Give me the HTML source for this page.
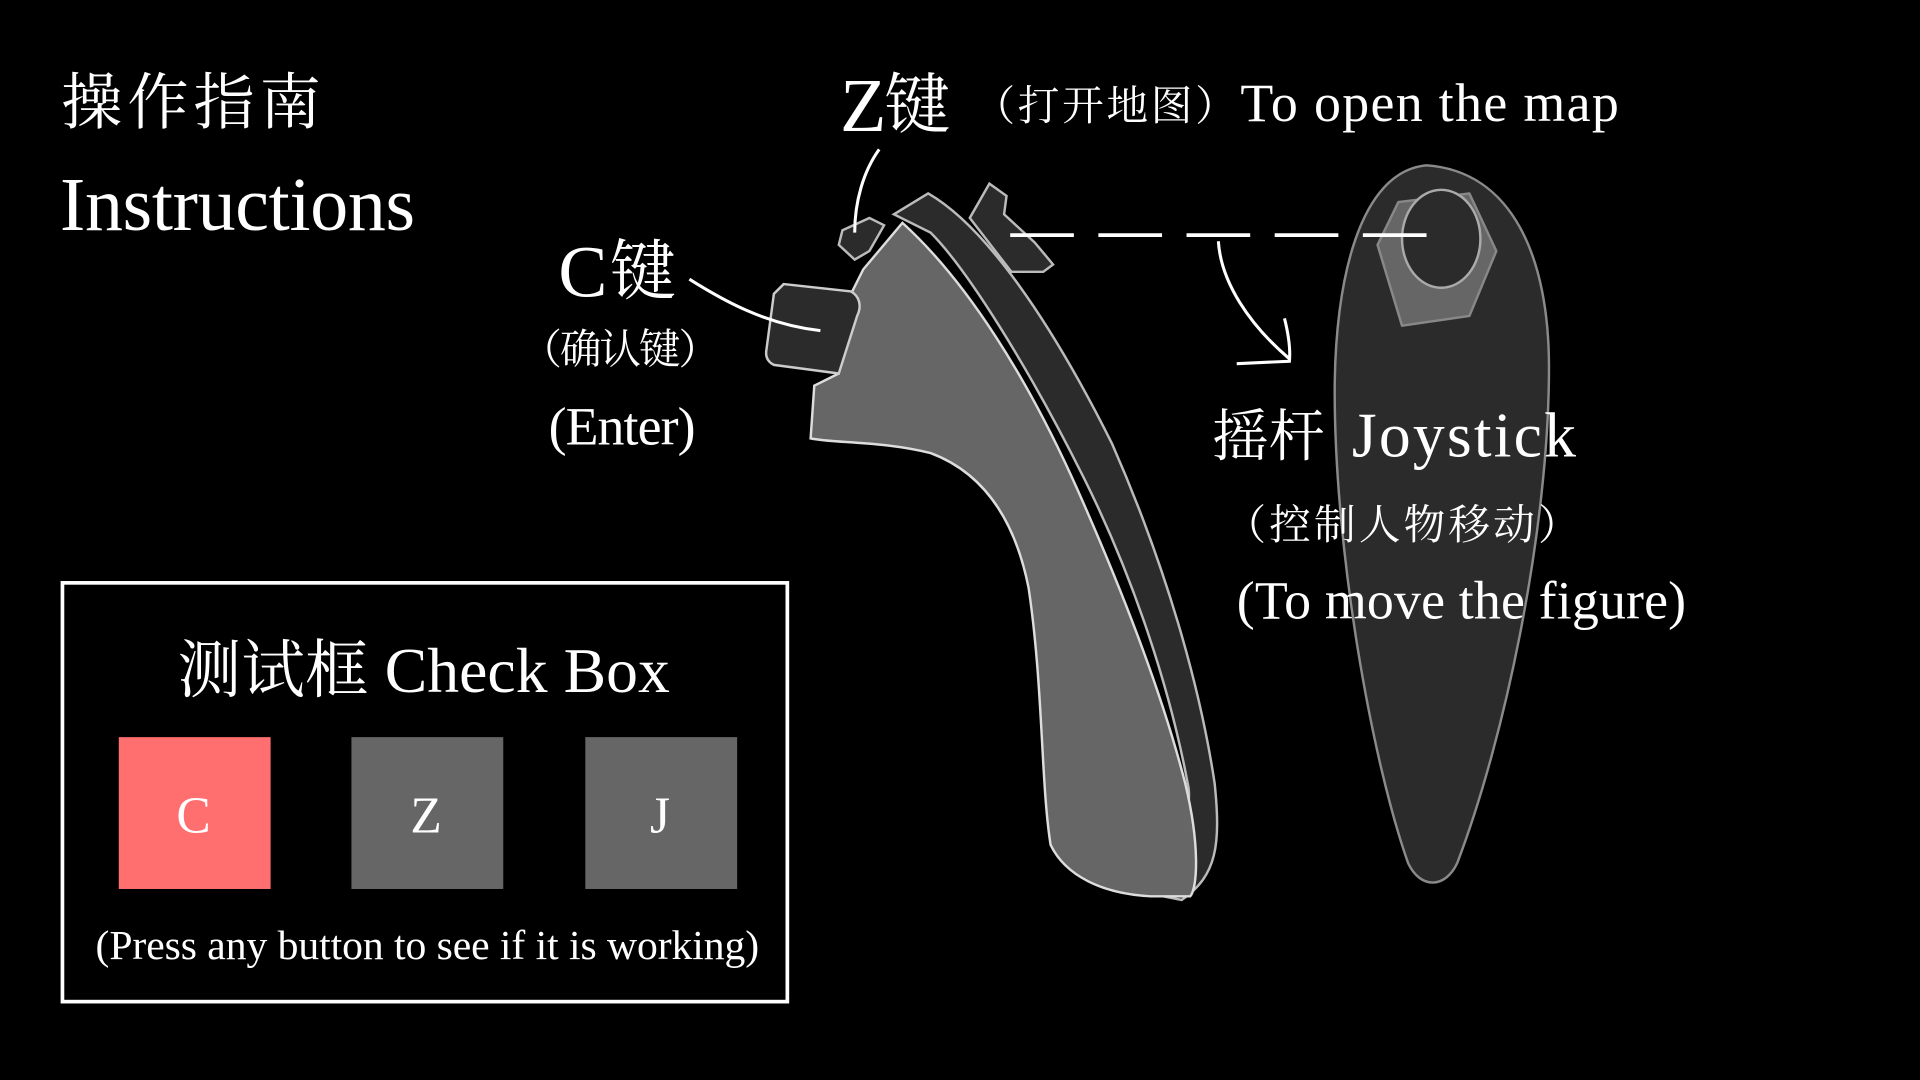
<!DOCTYPE html>
<html><head><meta charset="utf-8"><style>
html,body{margin:0;padding:0;background:#000;width:1920px;height:1080px;overflow:hidden}
svg{display:block}
text{fill:#fff;font-family:"Liberation Serif","Noto Serif CJK SC",serif}
.cj{font-family:"Noto Serif CJK SC","WenQuanYi Zen Hei",serif}
</style></head><body>
<svg width="1920" height="1080" viewBox="0 0 1568 882" preserveAspectRatio="none">
<rect width="1568" height="882" fill="#000"/>
<text class="cj" x="50" y="101" font-size="50" textLength="212">操作指南</text>
<text x="49" y="188" font-size="62" textLength="290">Instructions</text>
<rect x="51" y="476" width="592" height="342" fill="none" stroke="#fff" stroke-width="3"/>
<text x="346" y="565" font-size="52" text-anchor="middle" textLength="402">测试框 Check Box</text>
<rect x="97" y="602" width="124" height="124" fill="#ff6f6f"/>
<rect x="287" y="602" width="124" height="124" fill="#666"/>
<rect x="478" y="602" width="124" height="124" fill="#666"/>
<text x="158" y="680" font-size="42" text-anchor="middle">C</text>
<text x="348" y="680" font-size="42" text-anchor="middle">Z</text>
<text x="539" y="680" font-size="42" text-anchor="middle">J</text>
<text x="78" y="783" font-size="34" textLength="542">(Press any button to see if it is working)</text>
<text x="686" y="107" font-size="62">Z</text>
<text class="cj" x="722" y="104" font-size="54">键</text>
<text class="cj" x="795" y="98" font-size="34" textLength="215">（打开地图）</text>
<text x="1013" y="99" font-size="44" textLength="309">To open the map</text>
<text x="456" y="242" font-size="60">C</text>
<text class="cj" x="498" y="240" font-size="54">键</text>
<text class="cj" x="425" y="297" font-size="34" textLength="163">（确认键）</text>
<text x="448" y="363" font-size="44" textLength="120">(Enter)</text>
<path d="M1165,135 C1110,140 1090,230 1090,320 C1090,450 1120,620 1150,705 C1160,726 1180,726 1190,705 C1230,600 1265,430 1265,300 C1265,210 1235,140 1165,135Z" fill="#2b2b2b" stroke="#8a8a8a" stroke-width="2"/>
<path d="M1125,200 L1142,165 L1200,158 L1222,205 L1200,258 L1145,266 Z" fill="#666" stroke="#888" stroke-width="2" stroke-linejoin="round"/>
<ellipse cx="1177" cy="195" rx="32" ry="40" fill="#2b2b2b" stroke="#aaa" stroke-width="2"/>
<path d="M730,175 L758,158 C805,185 858,262 908,362 C952,462 980,560 992,640 C997,690 994,715 965,735 L940,730 C960,700 975,660 970,640 C955,560 925,470 885,390 C840,300 790,220 760,190 Z" fill="#2b2b2b" stroke="#bbb" stroke-width="2"/>
<path d="M737,182 C790,230 840,310 880,400 C920,490 950,570 968,640 C980,690 978,725 972,732 L940,732 C900,730 870,715 858,690 C850,640 852,560 840,480 C828,420 800,385 760,370 C720,360 680,362 662,358 L665,315 L685,305 L690,250 L705,220 Z" fill="#666" stroke="#ddd" stroke-width="2"/>
<path d="M808,150 L822,160 L820,175 L845,198 L860,216 L852,222 L826,222 L792,178 Z" fill="#2b2b2b" stroke="#bbb" stroke-width="2"/>
<path d="M640,232 L695,238 C702,242 704,250 700,258 L685,305 L632,298 C626,295 625,290 626,285 L632,240 Z" fill="#2b2b2b" stroke="#ccc" stroke-width="2"/>
<path d="M688,188 L710,178 L722,184 L710,205 L698,212 L685,200 Z" fill="#2b2b2b" stroke="#bbb" stroke-width="2"/>
<path d="M718,122 C705,140 698,165 698,190" fill="none" stroke="#fff" stroke-width="2.5"/>
<path d="M563,228 C590,245 625,265 670,270" fill="none" stroke="#fff" stroke-width="2.5"/>
<line x1="825" y1="192" x2="1180" y2="192" stroke="#fff" stroke-width="3" stroke-dasharray="52,20"/>
<path d="M995,197 C997,230 1020,265 1053,293 M1049,260 C1052,272 1054,285 1053,295 L1010,297" fill="none" stroke="#fff" stroke-width="2.5"/>
<text class="cj" x="990" y="372" font-size="46">摇杆</text>
<text x="1104" y="373" font-size="52" textLength="183">Joystick</text>
<text class="cj" x="1000" y="440" font-size="34" textLength="290">（控制人物移动）</text>
<text x="1010" y="505" font-size="44" textLength="367">(To move the figure)</text>
</svg>
</body></html>
